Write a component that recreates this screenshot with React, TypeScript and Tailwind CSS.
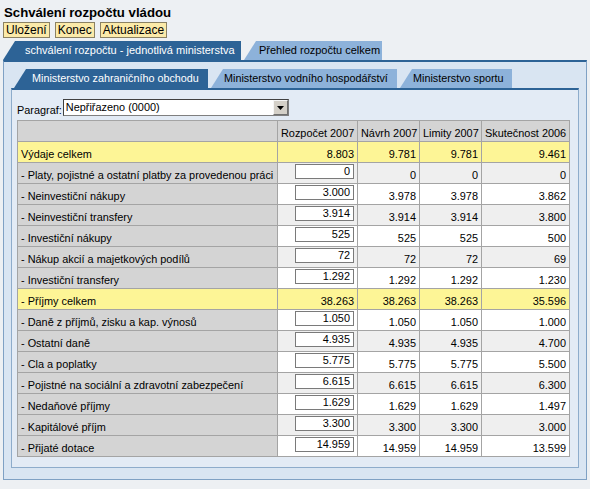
const rows: { label: string; kind: "total" | "item"; r: string; n: string; l: string; s: string }[] = [
  { label: "Výdaje celkem", kind: "total", r: "8.803", n: "9.781", l: "9.781", s: "9.461" },
  { label: "- Platy, pojistné a ostatní platby za provedenou práci", kind: "item", r: "0", n: "0", l: "0", s: "0" },
  { label: "- Neinvestiční nákupy", kind: "item", r: "3.000", n: "3.978", l: "3.978", s: "3.862" },
  { label: "- Neinvestiční transfery", kind: "item", r: "3.914", n: "3.914", l: "3.914", s: "3.800" },
  { label: "- Investiční nákupy", kind: "item", r: "525", n: "525", l: "525", s: "500" },
  { label: "- Nákup akcií a majetkových podílů", kind: "item", r: "72", n: "72", l: "72", s: "69" },
  { label: "- Investiční transfery", kind: "item", r: "1.292", n: "1.292", l: "1.292", s: "1.230" },
  { label: "- Příjmy celkem", kind: "total", r: "38.263", n: "38.263", l: "38.263", s: "35.596" },
  { label: "- Daně z příjmů, zisku a kap. výnosů", kind: "item", r: "1.050", n: "1.050", l: "1.050", s: "1.000" },
  { label: "- Ostatní daně", kind: "item", r: "4.935", n: "4.935", l: "4.935", s: "4.700" },
  { label: "- Cla a poplatky", kind: "item", r: "5.775", n: "5.775", l: "5.775", s: "5.500" },
  { label: "- Pojistné na sociální a zdravotní zabezpečení", kind: "item", r: "6.615", n: "6.615", l: "6.615", s: "6.300" },
  { label: "- Nedaňové příjmy", kind: "item", r: "1.629", n: "1.629", l: "1.629", s: "1.497" },
  { label: "- Kapitálové příjm", kind: "item", r: "3.300", n: "3.300", l: "3.300", s: "3.000" },
  { label: "- Přijaté dotace", kind: "item", r: "14.959", n: "14.959", l: "14.959", s: "13.599" },
];

const Tab = ({ label, active, className = "" }: { label: string; active?: boolean; className?: string }) => (
  <div
    className={`flex items-center whitespace-nowrap pr-[4px] [clip-path:polygon(12px_0,100%_0,100%_100%,0_100%)] ${
      active ? "bg-[#2d6396] text-white" : "bg-[#8db2da] text-black"
    } ${className}`}
  >
    {label}
  </div>
);

export default function App() {
  const base = "border border-[#a4a4a4] px-[3px] align-bottom leading-[13px] pb-[1px] whitespace-nowrap";
  const cell = `${base} text-right`;
  return (
    <div className="h-[489px] w-[590px] bg-[#edf0f3] text-[10.9px] text-black [font-family:'Liberation_Sans',Arial,sans-serif]">
      <div className="pl-[4px] pt-[4px] text-[13.2px] font-bold leading-[17px]">Schválení rozpočtu vládou</div>
      <div className="flex gap-[5px] pl-[3px] pt-[1px]">
        {["Uložení", "Konec", "Aktualizace"].map((b) => (
          <button
            key={b}
            type="button"
            className="h-[16px] border border-[#8a8163] bg-[#fbeaa9] px-[2px] text-[12px] leading-[14px]"
          >
            {b}
          </button>
        ))}
      </div>
      <div className="ml-[3px] mt-[3px] w-[584px]">
        <div className="flex h-[19px] gap-[3px] text-[11px]">
          <Tab label="schválení rozpočtu - jednotlivá ministerstva" active className="w-[238px] pl-[22px]" />
          <Tab label="Přehled rozpočtu celkem" className="w-[138px] pl-[15px]" />
        </div>
        <div className="h-[420px] border-x border-b border-t-2 border-[#7fa1c4] border-t-[#2d6396] bg-[#d9e5f2] px-[7px] pt-[7px]">
          <div className="flex h-[19px] gap-[3px] pl-[3px] text-[10.8px]">
            <Tab label="Ministerstvo zahraničního obchodu" active className="w-[194px] pl-[18px]" />
            <Tab label="Ministerstvo vodního hospodářství" className="w-[186px] pl-[13px]" />
            <Tab label="Ministerstvo sportu" className="w-[112px] pl-[13px]" />
          </div>
          <div className="h-[380px] border-x border-b border-t-2 border-[#8eaccb] border-t-[#2d6396] bg-[#e3ebf5] pl-[5px] pr-[9px] pt-[9px]">
            <div className="flex items-end gap-[1px]">
              <span className="leading-[12px]">Paragraf:</span>
              <div className="flex h-[17px] w-[226px] items-center justify-between border border-[#7f7f7f] border-t-[#404040] border-l-[#404040] bg-white pl-[2px]">
                <span className="leading-[13px]">Nepřiřazeno (0000)</span>
                <div className="flex h-[15px] w-[15px] items-center justify-center border border-[#f6f6f6] border-b-[#707070] border-r-[#707070] bg-[#d4d0c8]">
                  <svg width="7" height="4" viewBox="0 0 7 4">
                    <path d="M0 0h7L3.5 4z" fill="#000" />
                  </svg>
                </div>
              </div>
            </div>
            <table className="mt-[4px] w-[552px] table-fixed border-collapse">
              <colgroup>
                <col className="w-[260px]" />
                <col className="w-[80px]" />
                <col className="w-[62px]" />
                <col className="w-[62px]" />
                <col className="w-[88px]" />
              </colgroup>
              <thead>
                <tr className="h-[21px] bg-[#d4d4d4]">
                  <th className={cell} />
                  <th className={`${cell} font-normal`}>Rozpočet 2007</th>
                  <th className={`${cell} font-normal`}>Návrh 2007</th>
                  <th className={`${cell} font-normal`}>Limity 2007</th>
                  <th className={`${cell} font-normal`}>Skutečnost 2006</th>
                </tr>
              </thead>
              <tbody>
                {rows.map((row, i) => {
                  const total = row.kind === "total";
                  const bg = total ? "bg-[#fdf596]" : i % 2 === 1 ? "bg-[#efefef]" : "bg-white";
                  return (
                    <tr key={row.label} className={`h-[21px] ${bg}`}>
                      <td className={`${base} text-left ${total ? "" : "bg-[#d4d4d4]"}`}>{row.label}</td>
                      {total ? (
                        <td className={cell}>{row.r}</td>
                      ) : (
                        <td className="border border-[#a4a4a4] p-0 align-top">
                          <div className="ml-auto mr-[3px] mt-[1px] h-[15px] w-[59px] border border-[#7a7a7a] bg-white pr-[3px] text-right leading-[13px]">
                            {row.r}
                          </div>
                        </td>
                      )}
                      <td className={cell}>{row.n}</td>
                      <td className={cell}>{row.l}</td>
                      <td className={cell}>{row.s}</td>
                    </tr>
                  );
                })}
              </tbody>
            </table>
          </div>
        </div>
      </div>
    </div>
  );
}
